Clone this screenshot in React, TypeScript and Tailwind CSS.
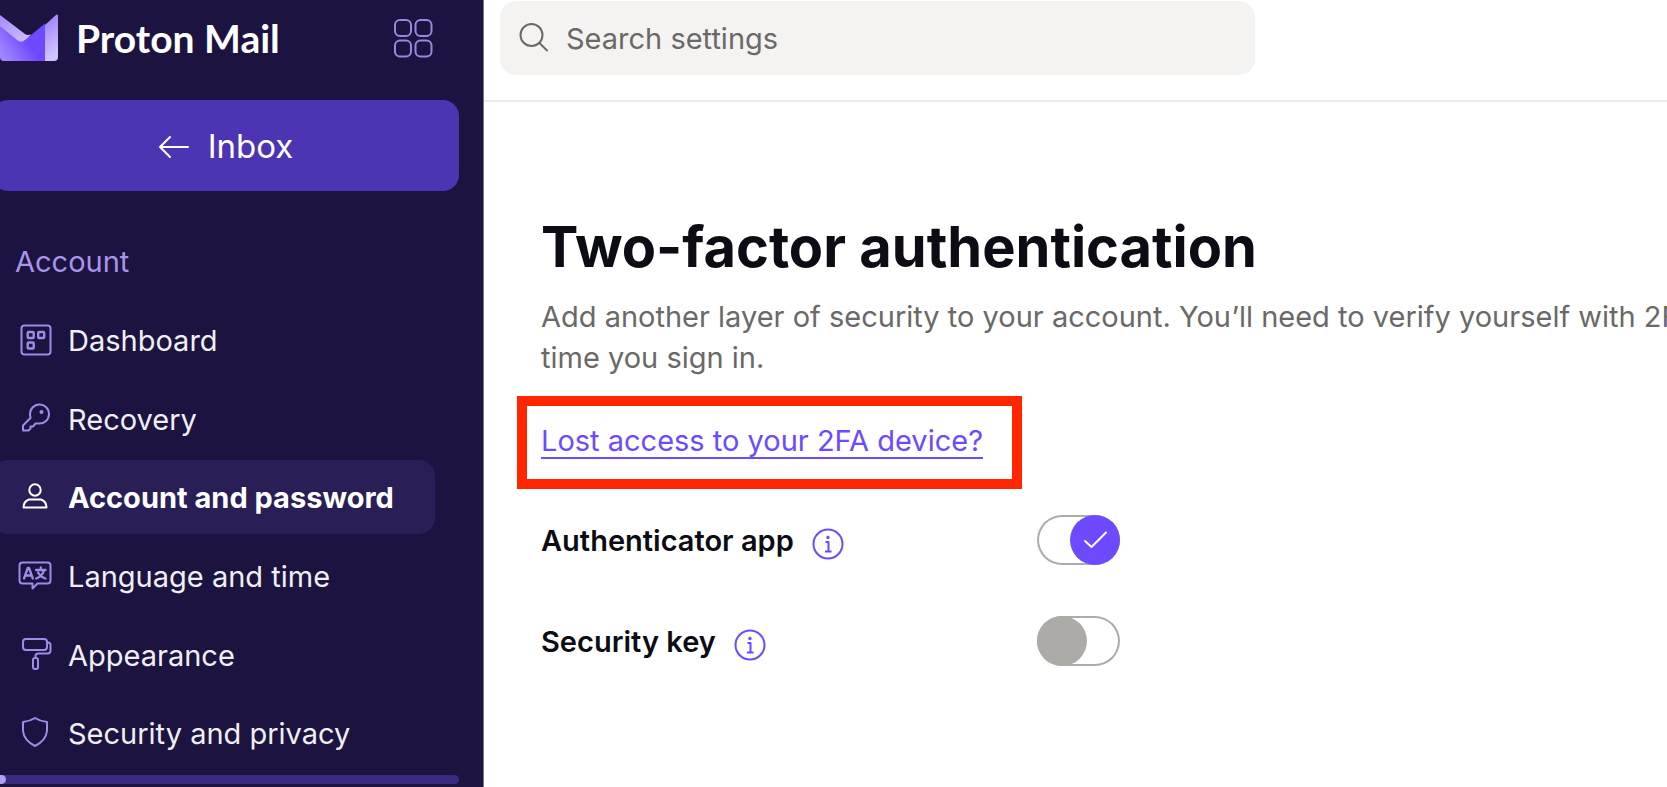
import { useState, type ReactNode } from "react";

const iconClass = "h-8 w-8 shrink-0 overflow-visible";

function Icon({ children, className = iconClass }: { children: ReactNode; className?: string }) {
  return (
    <svg
      className={className}
      viewBox="0 0 32 32"
      fill="none"
      stroke="currentColor"
      strokeWidth="2"
      strokeLinecap="round"
      strokeLinejoin="round"
      aria-hidden="true"
    >
      {children}
    </svg>
  );
}

function MailLogo() {
  return (
    <svg className="h-12 w-[58px] shrink-0" viewBox="0 0 58 48" aria-hidden="true">
      <defs>
        <linearGradient id="flap" x1="0" y1="0" x2="0.9" y2="1">
          <stop offset="0" stopColor="#a78bfa" />
          <stop offset="1" stopColor="#d0c0ff" />
        </linearGradient>
        <linearGradient id="side" x1="0" y1="0" x2="0.3" y2="1">
          <stop offset="0" stopColor="#9277ff" />
          <stop offset="0.3" stopColor="#a58cff" />
          <stop offset="1" stopColor="#d2c2ff" />
        </linearGradient>
        <linearGradient id="body" x1="0" y1="0.7" x2="0.55" y2="0.4">
          <stop offset="0" stopColor="#a085ff" />
          <stop offset="1" stopColor="#6d4aff" />
        </linearGradient>
      </defs>
      <path d="M45 11 56.500 0.500Q58 0 58 2V43Q58 47 54 47H40Z" fill="url(#side)" />
      <path d="M0 1 25 20Q28 22 31 20L24 31 0 22Z" fill="url(#flap)" />
      <path d="M0 12 17 26Q21 29.500 25 26L45 9.500V47H4Q0 47 0 43Z" fill="url(#body)" />
    </svg>
  );
}

const navItems: { label: string; icon: ReactNode; active?: boolean }[] = [
  {
    label: "Dashboard",
    icon: (
      <Icon>
        <rect x="1.500" y="1.500" width="29" height="29" rx="3" />
        <g strokeWidth="2.400">
          <rect x="7.700" y="8" width="6" height="6" rx="1" />
          <rect x="18.200" y="8" width="6" height="6" rx="1" />
          <rect x="7.700" y="18.500" width="6" height="6" rx="1" />
        </g>
      </Icon>
    ),
  },
  {
    label: "Recovery",
    icon: (
      <Icon>
        <path d="M10 11.500A9.500 9.500 0 1 1 19 20.500H15.500L13 23.500H10.500V25.500L8.500 27.500H3V22.500L10.500 15Z" />
        <circle cx="21.500" cy="9" r="2" fill="currentColor" stroke="none" />
      </Icon>
    ),
  },
  {
    label: "Account and password",
    active: true,
    icon: (
      <Icon>
        <circle cx="15" cy="9" r="5.700" />
        <path d="M9 18.500H21Q26.500 20.500 26.500 26.500H3.500Q3.500 20.500 9 18.500Z" />
      </Icon>
    ),
  },
  {
    label: "Language and time",
    icon: (
      <Icon>
        <path d="M2.500 2.500H27.500Q30.500 2.500 30.500 5.500V20.500Q30.500 23.500 27.500 23.500H17.500L12.500 28.500V23.500H2.500Q-0.500 23.500 -0.500 20.500V5.500Q-0.500 2.500 2.500 2.500Z" />
        <path
          strokeWidth="2.300"
          d="M4 18.500 7.800 8H9L12.800 18.500M5.500 15.500H11.500M16 10H25.500M20.800 7.500V10M23.800 10.500Q22.500 16 16.200 18.500M18 12.500Q20.500 17 25.500 18.500"
        />
      </Icon>
    ),
  },
  {
    label: "Appearance",
    icon: (
      <Icon>
        <rect x="3" y="1" width="24" height="11" rx="3" />
        <path d="M27 4.500H28Q30.500 4.500 30.500 7V12.500Q30.500 15.500 27.500 15.500H18Q15.500 15.500 15.500 18V20" />
        <rect x="13" y="20" width="5" height="11" rx="2" />
      </Icon>
    ),
  },
  {
    label: "Security and privacy",
    icon: (
      <Icon>
        <path d="M15 1Q20 4.200 27 5V14Q26 23.500 15 29Q4 23.500 3 14V5Q10 4.200 15 1Z" />
      </Icon>
    ),
  },
];

function Sidebar() {
  return (
    <aside className="flex w-[484px] shrink-0 flex-col border-r border-[#77738a] bg-[#1c1340]">
      <div className="flex h-[76px] items-center justify-between pr-[50px]">
        <a href="#home" className="flex items-center gap-[18px] text-white">
          <MailLogo />
          <span className="font-['Lato',sans-serif] text-[39px] leading-12 font-bold">Proton Mail</span>
        </a>
        <button type="button" aria-label="Apps" className="text-[#9c86dd]">
          <svg className="h-10 w-10" viewBox="0 0 40 40" fill="none" stroke="currentColor" strokeWidth="2" aria-hidden="true">
            <rect x="2" y="2" width="16" height="16" rx="5" />
            <rect x="22.500" y="2" width="16" height="16" rx="5" />
            <rect x="2" y="22.500" width="16" height="16" rx="5" />
            <rect x="22.500" y="22.500" width="16" height="16" rx="5" />
          </svg>
        </button>
      </div>
      <a
        href="#inbox"
        className="mt-6 mr-6 -ml-2 flex h-[91px] items-center justify-center gap-[18px] rounded-2xl bg-[#4c34b3] pt-0.5 text-[33px] text-white"
      >
        <Icon>
          <path d="M30 16H2M12 6 2 16 12 26" />
        </Icon>
        Inbox
      </a>
      <h2 className="mt-[51px] pl-[15px] text-[29px] leading-10 text-[#a994ea]">Account</h2>
      <nav aria-label="Settings" className="mt-[21px] flex flex-1">
        <ul className="flex flex-1 flex-col justify-between">
          {navItems.map((item) => (
            <li key={item.label}>
              <a
                href="#settings"
                aria-current={item.active ? "page" : undefined}
                className={
                  item.active
                    ? "mr-12 -ml-2 flex h-[74px] items-center gap-4 rounded-2xl bg-[#2a1e57] pt-0.5 pl-7 text-[29px] font-bold text-white"
                    : "mr-12 -ml-2 flex h-[74px] items-center gap-4 rounded-2xl pt-0.5 pl-7 text-[29px] text-[#f0eff2]"
                }
              >
                <span className={item.active ? "-mt-0.5 text-white" : "-mt-0.5 text-[#a08be6]"}>{item.icon}</span>
                {item.label}
              </a>
            </li>
          ))}
        </ul>
      </nav>
      <div className="mt-[5px] mr-6 mb-[3px] h-[9px] rounded-r-full bg-[#3c2a80]">
        <div className="h-full w-1.5 rounded-r-full bg-[#b09ff2]" />
      </div>
    </aside>
  );
}

function InfoButton({ label }: { label: string }) {
  return (
    <button type="button" aria-label={label} className="mt-1.5 text-[#6d4aff]">
      <Icon>
        <circle cx="16" cy="16" r="14.500" />
        <path d="M13.500 14H16.500V23M13 23.500H19.500" strokeLinecap="butt" />
        <circle cx="16" cy="9.500" r="1.700" fill="currentColor" stroke="none" />
      </Icon>
    </button>
  );
}

function ToggleRow({ id, label, initial }: { id: string; label: string; initial: boolean }) {
  const [on, setOn] = useState(initial);
  return (
    <div className="flex h-[50px] items-center">
      <div className="flex w-[496px] items-center gap-[18px] pt-0.5">
        <label htmlFor={id} className="text-[29px] font-semibold text-[#0c0c14]">
          {label}
        </label>
        <InfoButton label={`About ${label}`} />
      </div>
      <label
        htmlFor={id}
        className={
          on
            ? "flex h-[50px] w-[83px] cursor-pointer justify-end rounded-full shadow-[inset_0_0_0_2px_#adaba8]"
            : "flex h-[50px] w-[83px] cursor-pointer justify-start rounded-full shadow-[inset_0_0_0_2px_#adaba8]"
        }
      >
        <input
          id={id}
          type="checkbox"
          role="switch"
          checked={on}
          onChange={(e) => setOn(e.target.checked)}
          className="sr-only"
        />
        <span
          className={
            on
              ? "flex h-[50px] w-[50px] items-center justify-center rounded-full bg-[#6d4aff] text-white"
              : "h-[50px] w-[50px] rounded-full bg-[#adaba8]"
          }
        >
          {on && (
            <Icon>
              <path d="M6 17 12.500 23 27 8.500" />
            </Icon>
          )}
        </span>
      </label>
    </div>
  );
}

export default function App() {
  return (
    <div className="flex min-h-screen overflow-hidden bg-white font-['Inter',sans-serif]">
      <Sidebar />
      <div className="min-w-0 flex-1 overflow-hidden">
        <header className="border-b-2 border-[#ebebeb] pt-px pb-[25px] pl-4">
          <label className="flex h-[74px] w-[755px] items-center gap-4 rounded-2xl bg-[#f4f3f1] px-[18px] text-[#6b6967]">
            <Icon>
              <circle cx="13.500" cy="13" r="11" />
              <path d="M21.500 21 29 28.500" />
            </Icon>
            <input
              type="search"
              aria-label="Search settings"
              placeholder="Search settings"
              className="min-w-0 flex-1 bg-transparent pt-0.5 text-[29px] outline-none placeholder:text-[#6b6967]"
            />
          </label>
        </header>
        <main className="pt-[109px] pl-[57px]">
          <h1 className="text-[56px] leading-[72px] font-bold text-[#0c0c14]">Two-factor authentication</h1>
          <p className="mt-[13px] text-[29px] leading-[41px] whitespace-nowrap text-[#6b6967]">
            Add another layer of security to your account. You’ll need to verify yourself with 2FA
            <br />
            time you sign in.
          </p>
          <div className="mt-[18px] -ml-6 flex h-[93px] w-[505px] items-center border-10 border-[#ff2600] pb-1 pl-[14px]">
            <a
              href="#lost-access"
              className="text-[29px] whitespace-nowrap text-[#6d4aff] underline decoration-2 underline-offset-6"
            >
              Lost access to your 2FA device?
            </a>
          </div>
          <div className="mt-[26px] flex flex-col gap-[51px]">
            <ToggleRow id="authenticator-app" label="Authenticator app" initial={true} />
            <ToggleRow id="security-key" label="Security key" initial={false} />
          </div>
        </main>
      </div>
    </div>
  );
}
